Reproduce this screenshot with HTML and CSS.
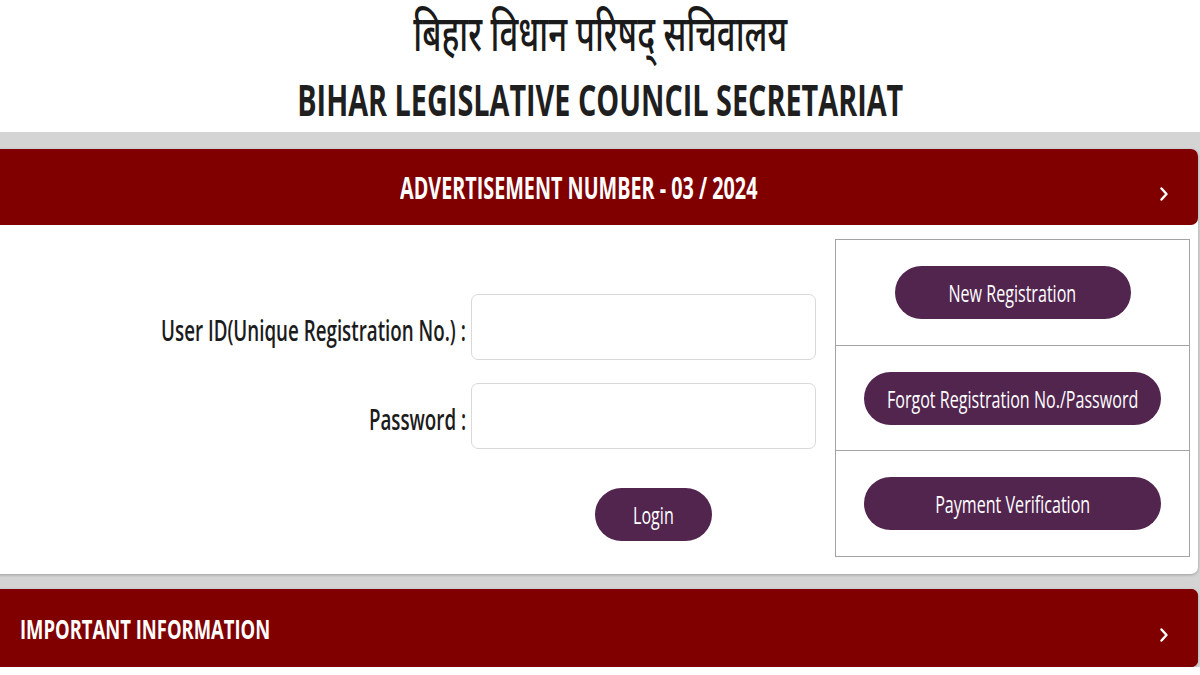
FILE: index.html
```html
<!DOCTYPE html>
<html lang="en">
<head>
<meta charset="utf-8">
<title>Bihar Legislative Council Secretariat</title>
<link rel="stylesheet" href="styles.css">
</head>
<body>
<header class="masthead">
  <div class="title-hi"><span class="sq sq-hi">बिहार विधान परिषद् सचिवालय</span></div>
  <div class="title-en"><span class="sq">BIHAR LEGISLATIVE COUNCIL SECRETARIAT</span></div>
</header>
<main class="band">
  <section class="card">
    <div class="bar bar-center">
      <span class="bar-spacer"></span>
      <span class="bar-title"><span class="sq">ADVERTISEMENT NUMBER - 03 / 2024</span></span>
      <span class="bar-end"><svg class="chev" viewBox="0 0 8 14" width="8" height="14"><polyline points="1.5,1.5 6.5,7 1.5,12.5" fill="none" stroke="#fff" stroke-width="2.4" stroke-linecap="round" stroke-linejoin="round"/></svg></span>
    </div>
    <div class="card-body">
      <form class="login">
        <label class="lbl" for="uid"><span class="sq sq-r">User ID(Unique Registration No.) :</span></label>
        <input class="field" id="uid" type="text">
        <label class="lbl" for="pwd"><span class="sq sq-r">Password :</span></label>
        <input class="field" id="pwd" type="password">
        <span></span>
        <div class="login-row"><button type="button" class="pill pill-login"><span class="sq">Login</span></button></div>
      </form>
      <div class="actions">
        <div class="action"><button type="button" class="pill pill-new"><span class="sq">New Registration</span></button></div>
        <div class="action"><button type="button" class="pill pill-wide"><span class="sq">Forgot Registration No./Password</span></button></div>
        <div class="action"><button type="button" class="pill pill-wide"><span class="sq">Payment Verification</span></button></div>
      </div>
    </div>
  </section>
  <section class="card card-info">
    <div class="bar bar-left">
      <span class="bar-title-left"><span class="sq sq-l">IMPORTANT INFORMATION</span></span>
      <span class="bar-end"><svg class="chev" viewBox="0 0 8 14" width="8" height="14"><polyline points="1.5,1.5 6.5,7 1.5,12.5" fill="none" stroke="#fff" stroke-width="2.4" stroke-linecap="round" stroke-linejoin="round"/></svg></span>
    </div>
  </section>
</main>
</body>
</html>
```
FILE: styles.css
```css
:root {
  --sx: 0.67;
  --red: #800000;
  --purple: #52254f;
}
* { box-sizing: border-box; }
html, body { margin: 0; padding: 0; overflow: hidden; }
body {
  background: #ffffff;
  font-family: "Open Sans", "Noto Sans", "Noto Sans Devanagari", "Lohit Devanagari", sans-serif;
  color: #1c1c1c;
  width: 1200px;
  height: 675px;
}
.sq {
  display: inline-block;
  transform: scaleX(var(--sx));
  transform-origin: center;
  white-space: nowrap;
}
.sq-hi { transform: scaleX(0.66); }
.sq-r { transform-origin: right center; }
.sq-l { transform-origin: left center; }

.masthead {
  height: 132px;
  display: flex;
  flex-direction: column;
  align-items: center;
  background: #fff;
}
.title-hi {
  font-family: "Noto Sans Devanagari", "Noto Sans", "Lohit Devanagari", "FreeSans", sans-serif;
  font-size: 50px;
  line-height: 60px;
  font-weight: 500;
  color: #1a1a1a;
  margin-top: 9px;
}
.title-en {
  font-size: 43px;
  line-height: 56px;
  font-weight: 700;
  color: #1f1f1f;
  margin-top: 3px;
}

.band {
  background: #d4d4d4;
  padding: 17px 2px 0 0;
  display: flex;
  flex-direction: column;
  gap: 15px;
  overflow: hidden;
}
.card {
  margin-left: -8px;
  border-radius: 7px;
  background: #fff;
  box-shadow: 0 1px 3px rgba(0,0,0,0.25);
}
.card-info { background: var(--red); }

.bar {
  background: var(--red);
  color: #fff;
  height: 76px;
  border-radius: 7px;
  display: grid;
  align-items: center;
}
.bar-center { grid-template-columns: 1fr auto 1fr; }
.bar-left { height: 78px; grid-template-columns: 1fr auto; }
.bar-title {
  font-size: 29.5px;
  font-weight: 700;
  margin-right: 32px;
}
.bar-title-left {
  font-size: 27.5px;
  font-weight: 700;
  padding-left: 28px;
}
.bar-end {
  justify-self: end;
  padding-right: 30px;
  display: flex;
  align-items: center;
  padding-top: 14px;
}
.chev { display: block; }

.card-body {
  display: flex;
  height: 349px;
  padding: 14px 8px 17px 0;
}
.login {
  flex: 1;
  display: grid;
  grid-template-columns: 474px 345px;
  column-gap: 5px;
  row-gap: 23px;
  align-content: start;
  align-items: center;
  padding-top: 55px;
}
.lbl {
  text-align: right;
  font-size: 28px;
  font-weight: 600;
  color: #1c1c1c;
  padding-top: 6px;
}
.field {
  height: 66px;
  width: 345px;
  border: 1px solid #d9d9d9;
  border-radius: 7px;
  background: #fff;
  outline: none;
}
.login-row {
  padding-left: 124px;
  padding-top: 16px;
}
.pill {
  height: 53px;
  border: none;
  border-radius: 27px;
  background: var(--purple);
  color: #fff;
  font-family: "Open Sans", "Noto Sans", sans-serif;
  font-size: 24px;
  font-weight: 400;
  display: flex;
  align-items: center;
  justify-content: center;
  padding: 0;
  overflow: visible;
}
.pill-login { width: 117px; }
.pill-new { width: 236px; }
.pill-wide { width: 297px; }

.actions {
  width: 355px;
  border: 1px solid #a3a3a3;
  display: flex;
  flex-direction: column;
}
.action {
  flex: 1;
  display: flex;
  align-items: center;
  justify-content: center;
}
.action + .action { border-top: 1px solid #a3a3a3; }
```
